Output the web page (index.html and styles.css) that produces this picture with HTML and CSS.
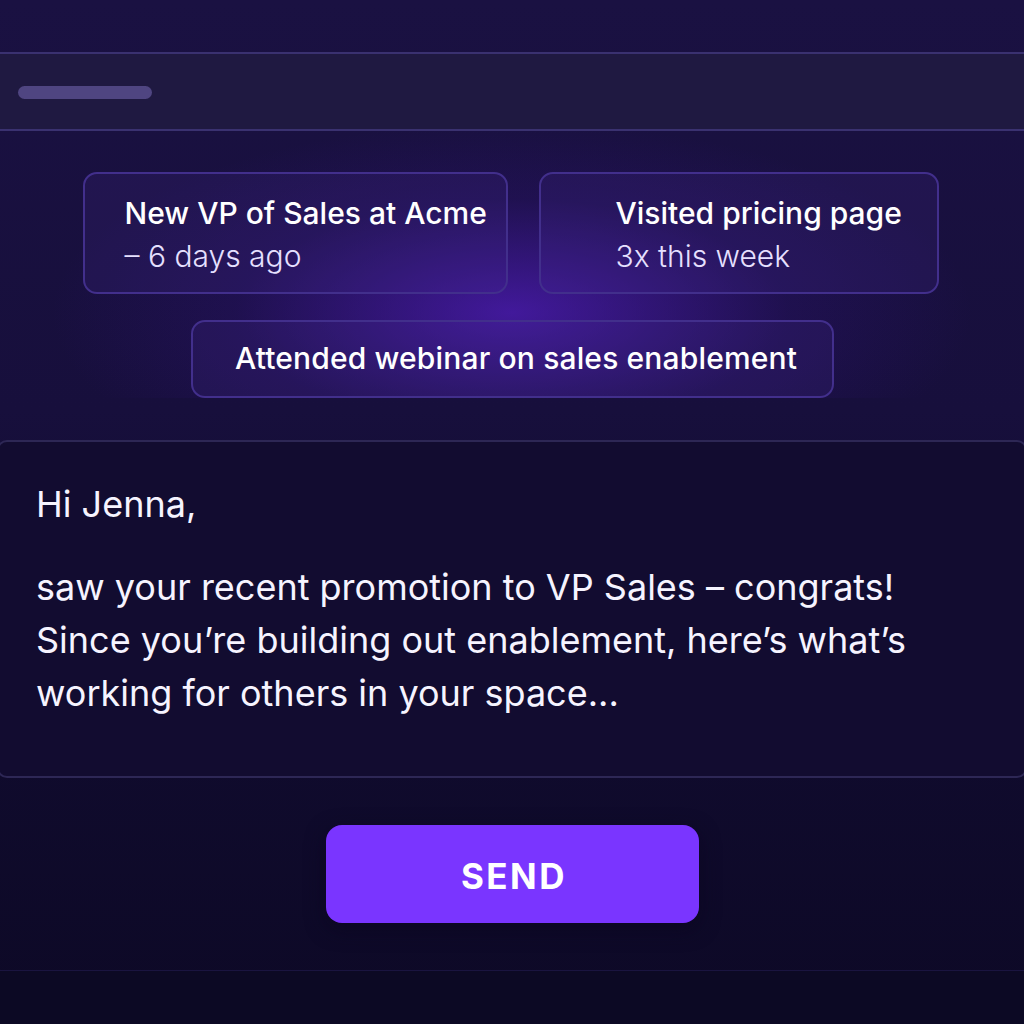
FILE: index.html
```html
<!DOCTYPE html>
<html>
<head>
<meta charset="utf-8">
<link rel="stylesheet" href="styles.css">
</head>
<body>
<div class="page">
  <div class="top"></div>
  <div class="toolbar"><span class="pill"></span></div>
  <section class="signals">
    <div class="row">
      <div class="card card-a">
        <div class="title">New VP of Sales at Acme</div>
        <div class="sub">– 6 days ago</div>
      </div>
      <div class="card card-b">
        <div class="title">Visited pricing page</div>
        <div class="sub">3x this week</div>
      </div>
    </div>
    <div class="row">
      <div class="card card-c">
        <div class="title wide">Attended webinar on sales enablement</div>
      </div>
    </div>
  </section>
  <section class="email">
    <p class="greet">Hi Jenna,</p>
    <p class="body">saw your recent promotion to VP Sales – congrats!<br>Since you’re building out enablement, here’s what’s<br>working for others in your space...</p>
  </section>
  <div class="actions">
    <button class="send">SEND</button>
  </div>
  <div class="footer"></div>
</div>
</body>
</html>
```
FILE: styles.css
```css
* { box-sizing: border-box; }
html, body { margin: 0; padding: 0; }
body {
  width: 1024px;
  height: 1024px;
  overflow: hidden;
  font-family: Inter, "Noto Sans", sans-serif;
  color: #f4f1ff;
  background: linear-gradient(180deg, #1a1142 0%, #170f3c 40%, #100b2e 70%, #0d0926 100%);
}
.page {
  position: relative;
  display: flex;
  flex-direction: column;
  height: 1024px;
}
.top { height: 52px; }
.toolbar {
  height: 79px;
  background: #1f1941;
  border-top: 2px solid #3a3170;
  border-bottom: 2px solid #3a3170;
  display: flex;
  align-items: center;
  padding-left: 18px;
}
.pill {
  width: 134px;
  height: 13px;
  border-radius: 7px;
  background: #4f4581;
  margin-top: 2px;
}
.signals {
  display: flex;
  flex-direction: column;
  align-items: center;
  gap: 26px;
  padding-top: 41px;
  background: radial-gradient(ellipse 460px 190px at 50% 68%, rgba(88, 30, 205, 0.65), rgba(60, 20, 150, 0.2) 60%, rgba(0,0,0,0) 100%);
}
.row {
  display: flex;
  gap: 31px;
  justify-content: center;
}
.card {
  border: 2px solid #422f8c;
  border-radius: 14px;
  background: rgba(70, 45, 145, 0.2);
}
.card-a { width: 425px; height: 122px; padding: 19px 0 0 40px; margin-left: -3px; }
.card-b { width: 400px; height: 122px; padding: 19px 0 0 75px; }
.card-c { width: 643px; height: 78px; display: flex; align-items: center; justify-content: center; padding-left: 8px; }
.title {
  font-size: 30px;
  font-weight: 500;
  line-height: 40px;
  color: #ffffff;
}
.title.wide { letter-spacing: 0.15px; margin-top: -2px; }
.sub {
  font-size: 30px;
  font-weight: 300;
  line-height: 46px;
  color: #e6e0ff;
}
.email {
  margin: 42px -3px 0 -3px;
  height: 338px;
  border: 2px solid #2d2755;
  border-radius: 10px;
  background: #120c30;
  padding: 36px 0 0 37px;
}
.email p { margin: 0; font-weight: 400; color: #f6f4ff; }
.greet { font-size: 36px; line-height: 52px; }
.body { font-size: 36px; line-height: 53px; margin-top: 31px !important; }
.actions {
  display: flex;
  justify-content: center;
  padding-top: 47px;
}
.send {
  width: 373px;
  height: 98px;
  border: none;
  border-radius: 16px;
  background: #7a35ff;
  color: #ffffff;
  font-family: Inter, "Noto Sans", sans-serif;
  font-size: 35px;
  font-weight: 700;
  letter-spacing: 2.5px;
  padding: 4px 0 0 4px;
  box-shadow: 0 6px 20px rgba(10, 5, 30, 0.6);
}
.footer {
  margin-top: 47px;
  border-top: 1px solid #1a1440;
  flex: 1;
  background: #0c0924;
}
```
